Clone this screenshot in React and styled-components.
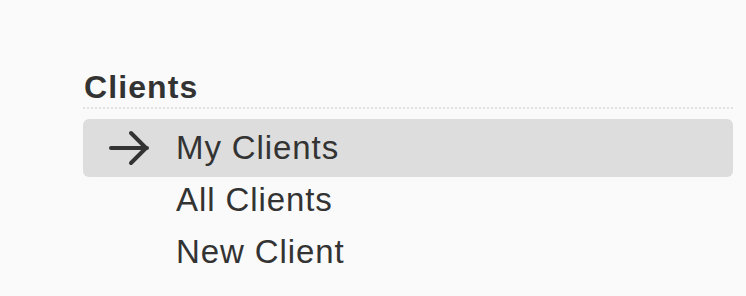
import React from 'react'
import styled, {createGlobalStyle} from 'styled-components'

const Global = createGlobalStyle`
	html, body {
		margin: 0;
		padding: 0;
		background: #fafafa;
	}
	body {
		font-family: "Liberation Sans", Arial, sans-serif;
		color: #333;
	}
`

const Wrapper = styled.nav`
	padding: 68px 13px 0 83px;
`

const Title = styled.h2`
	margin: 0;
	padding: 0 0 1px 1px;
	font-size: 32px;
	font-weight: 700;
	line-height: 38px;
	letter-spacing: 1.1px;
	border-bottom: 2px dotted #e2e2e2;
`

const List = styled.ul`
	list-style: none;
	margin: 13px 0 0;
	padding: 0;
`

const Item = styled.li`
	display: flex;
	align-items: center;
	height: ${p => (p.active ? '58px' : '52px')};
	margin: ${p => (p.active ? '-3px 0' : '0')};
	padding-left: 24px;
	border-radius: 6px;
	background: ${p => (p.active ? '#dddddd' : 'transparent')};
	font-size: 33px;
	letter-spacing: 0.9px;
	color: #333;
`

const Icon = styled.span`
	display: flex;
	width: 69px;
`

const Arrow = () => (
	<svg width="44" height="36" viewBox="0 0 44 36" fill="none" stroke="#333" strokeWidth="4" strokeLinecap="round" strokeLinejoin="round">
		<path d="M4 18h36M24 3l15 15-15 15" />
	</svg>
)

const links = [
	{label: 'My Clients', active: true},
	{label: 'All Clients'},
	{label: 'New Client'},
]

const App = () => (
	<>
		<Global />
		<Wrapper>
			<Title>Clients</Title>
			<List>
				{links.map(link => (
					<Item key={link.label} active={link.active}>
						<Icon>{link.active && <Arrow />}</Icon>
						{link.label}
					</Item>
				))}
			</List>
		</Wrapper>
	</>
)

export default App
